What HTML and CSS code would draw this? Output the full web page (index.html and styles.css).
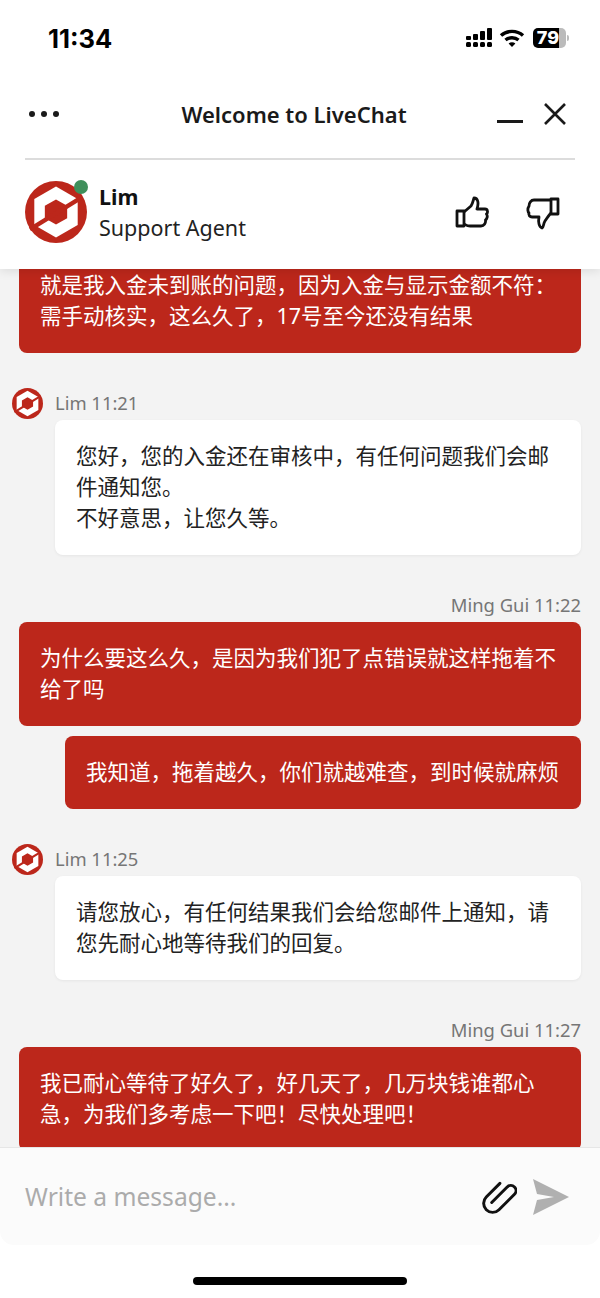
FILE: index.html
```html
<!DOCTYPE html>
<html lang="zh">
<head>
    <meta charset="UTF-8">
    <meta name="viewport" content="width=device-width, initial-scale=1.0">
    <title>Welcome to LiveChat</title>
    <link rel="stylesheet" href="styles.css">
</head>
<body>

<svg class="defs" width="0" height="0">
    <symbol id="logo" viewBox="0 0 100 100">
        <circle cx="50" cy="50" r="50" fill="#bc271b"/>
        <path d="M50 9 85 29V71L50 91 15 71V29Z" fill="#fff"/>
        <path d="M50 30 68 40V60L50 70 32 60V40Z" fill="#bc271b"/>
        <path d="M8 78 92 26" stroke="#bc271b" stroke-width="7" fill="none"/>
    </symbol>
</svg>

<div class="phone">
    <header class="top">
        <div class="status-bar">
            <span class="clock">11:34</span>
            <div class="status-icons">
                <svg width="30" height="20" viewBox="0 0 30 20" fill="#000">
                    <rect x="1" y="8" width="5" height="4" rx="1"/><rect x="1" y="14" width="5" height="5" rx="1.5"/>
                    <rect x="8" y="6" width="5" height="6" rx="1"/><rect x="8" y="14" width="5" height="5" rx="1.5"/>
                    <rect x="15" y="3" width="5" height="9" rx="1"/><rect x="15" y="14" width="5" height="5" rx="1.5"/>
                    <rect x="22" y="0" width="5" height="12" rx="1"/><rect x="22" y="14" width="5" height="5" rx="1.5"/>
                </svg>
                <svg class="wifi" width="26" height="20" viewBox="0 0 26 20" fill="none" stroke="#000" stroke-width="3.4">
                    <path d="M2 7.5C8 2 18 2 24 7.5"/>
                    <path d="M6.5 12C10 9 16 9 19.5 12"/>
                    <path d="M13 19 9.6 15.4C11.500 14 14.500 14 16.400 15.400Z" fill="#000" stroke="none"/>
                </svg>
                <div class="battery"><span class="battery-level">79</span></div>
                <span class="battery-cap"></span>
            </div>
        </div>
        <div class="title-bar">
            <div class="dots"><i></i><i></i><i></i></div>
            <h1>Welcome to LiveChat</h1>
            <div class="window-btns">
                <span class="minimize"></span>
                <svg width="24" height="24" viewBox="0 0 24 24" stroke="#1a1a1a" stroke-width="2.6" fill="none">
                    <path d="M2 2 22 22M22 2 2 22"/>
                </svg>
            </div>
        </div>
        <div class="agent-row">
            <div class="agent-avatar">
                <svg width="62" height="62"><use href="#logo"/></svg>
                <span class="online"></span>
            </div>
            <div class="agent-info">
                <strong>Lim</strong>
                <span>Support Agent</span>
            </div>
            <div class="rating">
                <svg width="34" height="34" viewBox="0 0 34 34" fill="none" stroke="#111" stroke-width="2.800" stroke-linejoin="round">
                    <path d="M2 15H9V30H2Z"/>
                    <path d="M9 16 16 10C18 7 18 5 19 2 23 2 24 7 22 13H30C33 13 33 17 31.500 18 33 20 32 23 30.500 24 31 27 29 30 26 30H15C12 30 11 29 9 28"/>
                </svg>
                <svg width="34" height="34" viewBox="0 0 34 34" fill="none" stroke="#111" stroke-width="2.800" stroke-linejoin="round">
                    <path d="M32 3H25V18H32Z"/>
                    <path d="M25 4H8C5 4 3 7 3 10 1 13 2 16 3 17 2 19 4 21 6 21H13C12 26 13 31 16 32 18 31 17 28 19 25 21 22 23 19 25 17"/>
                </svg>
            </div>
        </div>
    </header>

    <main class="chat">
        <div class="msgs">
            <section class="group from-me first">
                <div class="bubble red">就是我入金未到账的问题，因为入金与显示金额不符：需手动核实，这么久了，17号至今还没有结果</div>
            </section>

            <section class="group from-agent">
                <div class="meta">
                    <svg width="31" height="31"><use href="#logo"/></svg>
                    <span>Lim 11:21</span>
                </div>
                <div class="bubble white">您好，您的入金还在审核中，有任何问题我们会邮件通知您。<br>不好意思，让您久等。</div>
            </section>

            <section class="group from-me">
                <div class="meta">Ming Gui 11:22</div>
                <div class="bubble red">为什么要这么久，是因为我们犯了点错误就这样拖着不给了吗</div>
                <div class="bubble red">我知道，拖着越久，你们就越难查，到时候就麻烦</div>
            </section>

            <section class="group from-agent">
                <div class="meta">
                    <svg width="31" height="31"><use href="#logo"/></svg>
                    <span>Lim 11:25</span>
                </div>
                <div class="bubble white">请您放心，有任何结果我们会给您邮件上通知，请您先耐心地等待我们的回复。</div>
            </section>

            <section class="group from-me">
                <div class="meta">Ming Gui 11:27</div>
                <div class="bubble red">我已耐心等待了好久了，好几天了，几万块钱谁都心急，为我们多考虑一下吧！尽快处理吧！</div>
            </section>
        </div>
    </main>

    <footer class="composer">
        <span class="placeholder">Write a message...</span>
        <div class="composer-icons">
            <svg width="36" height="36" viewBox="-14 -14 28 28" fill="none" stroke="#111" stroke-width="2.300" stroke-linecap="round">
                <path transform="rotate(45) translate(0 -2)" d="M-1 9V-8A4 4 0 0 1 7 -8V9A7 7 0 0 1 -7 9V-6"/>
            </svg>
            <svg width="38" height="36" viewBox="0 0 38 36" fill="#b0b0b0">
                <path d="M1 0 37 18 1 36 5 21 22 18 5 15Z"/>
            </svg>
        </div>
    </footer>

    <div class="home-area"><span class="home-bar"></span></div>
</div>

</body>
</html>
```

FILE: styles.css
```css
* {
    box-sizing: border-box;
}
html, body {
    margin: 0;
    padding: 0;
}
body {
    font-family: "Noto Sans", "Noto Sans CJK SC", sans-serif;
    background-color: #fff;
    color: #111;
}
.defs {
    position: absolute;
}
.phone {
    width: 600px;
    height: 1298px;
    display: flex;
    flex-direction: column;
    overflow: hidden;
}

/* header */
.top {
    height: 269px;
    padding: 0 25px;
    background-color: #fff;
    box-shadow: 0 2px 10px rgba(0, 0, 0, 0.1);
    position: relative;
    z-index: 2;
    flex-shrink: 0;
}
.status-bar {
    height: 76px;
    display: flex;
    justify-content: space-between;
    align-items: center;
    padding: 0 6px 0 23px;
}
.clock {
    font-family: Inter, sans-serif;
    font-size: 25.5px;
    font-weight: 700;
    color: #000;
}
.status-icons {
    display: flex;
    align-items: center;
    gap: 4px;
}
.battery {
    width: 33px;
    height: 20px;
    margin-left: 4px;
    border-radius: 5px;
    background: linear-gradient(90deg, #000 79%, #bbb 79%);
    overflow: hidden;
}
.battery-level {
    display: block;
    font-family: Inter, sans-serif;
    font-size: 18px;
    font-weight: 800;
    line-height: 20px;
    color: #fff;
    text-align: center;
    padding-right: 3px;
}
.battery-cap {
    width: 2px;
    height: 6px;
    margin-left: -3px;
    border-radius: 0 2px 2px 0;
    background-color: #bbb;
}
.title-bar {
    height: 84px;
    display: flex;
    align-items: center;
    border-bottom: 2px solid #dcdcdc;
    padding-bottom: 7px;
}
.title-bar h1 {
    flex: 1;
    margin: 0;
    padding-left: 32px;
    text-align: center;
    font-size: 22px;
    font-weight: 600;
    color: #1a1a1a;
}
.dots {
    display: flex;
    gap: 6px;
    padding-left: 4px;
}
.dots i {
    width: 6px;
    height: 6px;
    border-radius: 50%;
    background-color: #1a1a1a;
}
.window-btns {
    display: flex;
    align-items: center;
    gap: 20px;
    padding-right: 8px;
}
.minimize {
    width: 26px;
    height: 3px;
    margin-top: 15px;
    background-color: #1a1a1a;
}
.agent-row {
    display: flex;
    align-items: center;
    padding-top: 21px;
}
.agent-avatar {
    position: relative;
    width: 62px;
    height: 62px;
}
.online {
    position: absolute;
    top: -1px;
    right: -1px;
    width: 14px;
    height: 14px;
    border-radius: 50%;
    background-color: #3f8f5b;
}
.agent-info {
    margin-left: 12px;
    display: flex;
    flex-direction: column;
    font-size: 21.5px;
    line-height: 31px;
}
.agent-info strong {
    font-weight: 700;
}
.agent-info span {
    color: #222;
}
.rating {
    margin-left: auto;
    display: flex;
    gap: 37px;
    padding: 2px 15px 0 0;
}

/* messages */
.chat {
    flex: 1;
    min-height: 0;
    background-color: #f3f3f3;
    overflow: hidden;
}
.msgs {
    margin-top: -20px;
    padding: 0 19px;
}
.group {
    display: flex;
    flex-direction: column;
    gap: 10px;
}
.group.from-agent {
    margin-top: 35px;
    gap: 1px;
}
.group.from-me {
    margin-top: 38px;
    align-items: flex-end;
}
.group.first {
    margin-top: 0;
}
.meta {
    font-size: 18.4px;
    color: #767676;
    line-height: 24px;
}
.from-me .meta {
    margin-bottom: -5px;
}
.from-agent .meta {
    display: flex;
    align-items: center;
    gap: 12px;
    margin-left: -7px;
    height: 31px;
    line-height: 29px;
}
.from-agent .meta span {
    padding-bottom: 2px;
}
.bubble {
    font-size: 21.5px;
    line-height: 31px;
    padding: 20px 22px 22px 21px;
    border-radius: 8px;
}
.bubble.red {
    background-color: #bc271b;
    color: #fff;
}
.bubble.white {
    background-color: #fff;
    color: #222;
    margin-left: 36px;
    box-shadow: 0 1px 3px rgba(0, 0, 0, 0.06);
}

/* bottom input */
.composer {
    height: 98px;
    flex-shrink: 0;
    background-color: #fbfbfb;
    border-top: 1px solid #e6e6e6;
    border-radius: 0 0 14px 14px;
    display: flex;
    align-items: center;
    justify-content: space-between;
    padding: 0 30px 0 25px;
    position: relative;
    z-index: 2;
}
.placeholder {
    font-size: 24.6px;
    color: #ababab;
}
.composer-icons {
    display: flex;
    align-items: center;
    gap: 15px;
}
.home-area {
    height: 53px;
    flex-shrink: 0;
    display: flex;
    justify-content: center;
    padding-top: 32px;
}
.home-bar {
    width: 214px;
    height: 8px;
    border-radius: 4px;
    background-color: #000;
}
```
